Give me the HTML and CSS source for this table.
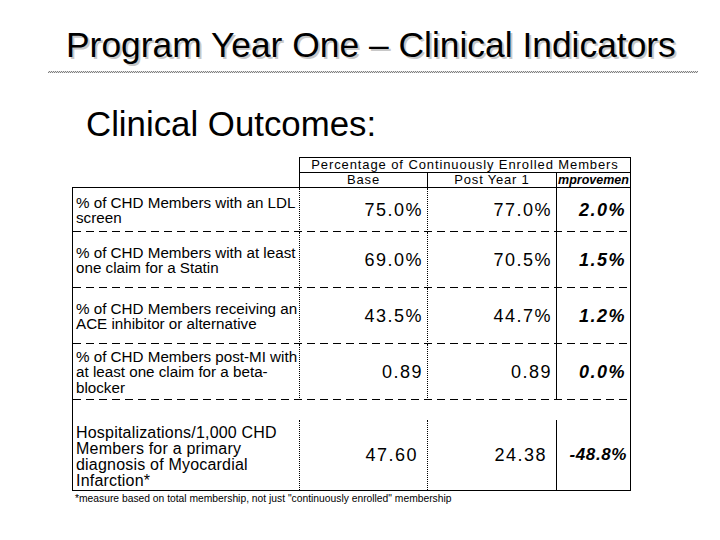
FILE: index.html
```html
<!DOCTYPE html>
<html>
<head>
<meta charset="utf-8">
<link rel="stylesheet" href="styles.css">
</head>
<body>
<div class="slide">
  <h1 class="title">Program Year One – Clinical Indicators</h1>
  <div class="rule"></div>
  <h2 class="subtitle">Clinical Outcomes:</h2>
  <div class="table">
    <div class="thead">
      <div class="thead-top">Percentage of Continuously Enrolled Members</div>
      <div class="thead-cols">
        <div class="hc">Base</div>
        <div class="hc">Post Year 1</div>
        <div class="hc hc-imp">mprovemen</div>
      </div>
    </div>
    <div class="tbody">
      <div class="row r1 dashed">
        <div class="cell label">% of CHD Members with an LDL<br>screen</div>
        <div class="cell num dot">75.0%</div>
        <div class="cell num dot3">77.0%</div>
        <div class="cell imp">2.0%</div>
      </div>
      <div class="row r2 dashed">
        <div class="cell label">% of CHD Members with at least<br>one claim for a Statin</div>
        <div class="cell num dot">69.0%</div>
        <div class="cell num dot3">70.5%</div>
        <div class="cell imp">1.5%</div>
      </div>
      <div class="row r2 dashed">
        <div class="cell label">% of CHD Members receiving an<br>ACE inhibitor or alternative</div>
        <div class="cell num dot">43.5%</div>
        <div class="cell num dot3">44.7%</div>
        <div class="cell imp">1.2%</div>
      </div>
      <div class="row r2 dashed">
        <div class="cell label">% of CHD Members post-MI with<br>at least one claim for a beta-<br>blocker</div>
        <div class="cell num dot">0.89</div>
        <div class="cell num dot3">0.89</div>
        <div class="cell imp">0.0%</div>
      </div>
      <div class="spacer"></div>
      <div class="row r5">
        <div class="cell label big">Hospitalizations/1,000 CHD<br>Members for a primary<br>diagnosis of Myocardial<br>Infarction*</div>
        <div class="cell num dot wide">47.60</div>
        <div class="cell num dot3 wide">24.38</div>
        <div class="cell imp neg">-48.8%</div>
      </div>
    </div>
    <div class="foot">*measure based on total membership, not just "continuously enrolled" membership</div>
  </div>
</div>
</body>
</html>
```
FILE: styles.css
```css
html, body {
  margin: 0;
  padding: 0;
  background: #fff;
}
body {
  font-family: "Liberation Sans", Arial, sans-serif;
  color: #000;
}
.slide {
  width: 720px;
  height: 540px;
  overflow: hidden;
}
.title {
  margin: 25px 0 0 66px;
  font-size: 35.4px;
  font-weight: normal;
  line-height: 40px;
  white-space: nowrap;
  text-shadow: 2px 2px 0 #c8c8c8;
}
.rule {
  margin: 6px 0 0 48px;
  width: 650px;
  height: 2px;
  background: repeating-conic-gradient(#808080 0 25%, #e4e4e4 0 50%) 0 0 / 2px 2px;
}
.subtitle {
  margin: 31px 0 0 86px;
  font-size: 34.8px;
  font-weight: normal;
  line-height: 40px;
  white-space: nowrap;
}
.table {
  margin: 13px 0 0 72px;
  width: 559px;
}
.thead {
  margin-left: 227px;
  width: 332px;
  box-sizing: border-box;
  border: 1px solid #000;
  border-bottom: 0;
  font-size: 13px;
}
.thead-top {
  height: 14px;
  line-height: 14px;
  text-align: center;
  border-bottom: 1px solid #000;
  white-space: nowrap;
  letter-spacing: 0.9px;
}
.thead-cols {
  display: grid;
  grid-template-columns: 128px 129px 73px;
  height: 14px;
}
.hc {
  line-height: 14px;
  text-align: center;
  border-right: 1px solid #000;
  white-space: nowrap;
  box-sizing: border-box;
  letter-spacing: 0.8px;
}
.hc-imp {
  border-right: 0;
  overflow: hidden;
  font-size: 12.5px;
  font-weight: bold;
  font-style: italic;
  letter-spacing: 0;
}
.tbody {
  box-sizing: border-box;
  width: 559px;
  border: 1px solid #000;
}
.row {
  display: grid;
  grid-template-columns: 227px 128px 129px 73px;
}
.dashed {
  background: repeating-linear-gradient(90deg, #000 0 8px, transparent 8px 13px) left bottom / 100% 1px no-repeat;
}
.r1 { height: 44px; }
.r2 { height: 56px; }
.r5 { height: 70px; }
.spacer { height: 20px; }
.cell {
  box-sizing: border-box;
  display: flex;
  align-items: center;
  white-space: nowrap;
}
.label {
  padding-left: 3px;
  font-size: 15.2px;
  line-height: 15.5px;
  border-right: 1px dotted #000;
}
.label.big {
  font-size: 16px;
  letter-spacing: 0.2px;
  line-height: 16px;
  padding-top: 3px;
}
.num {
  justify-content: flex-end;
  padding-right: 4px;
  font-size: 18px;
  letter-spacing: 1.5px;
}
.num.wide {
  padding-right: 9px;
}
.dot { border-right: 1px dotted #000; }
.dot3 { border-right: 1px solid #000; }
.imp {
  justify-content: flex-end;
  padding-right: 4px;
  font-size: 18px;
  font-weight: bold;
  font-style: italic;
  letter-spacing: 1.5px;
}
.imp.neg {
  font-size: 17px;
  letter-spacing: 0.6px;
  padding-right: 3px;
}
.foot {
  margin: 2px 0 0 3px;
  font-size: 10.3px;
  line-height: 11px;
  white-space: nowrap;
}
```
